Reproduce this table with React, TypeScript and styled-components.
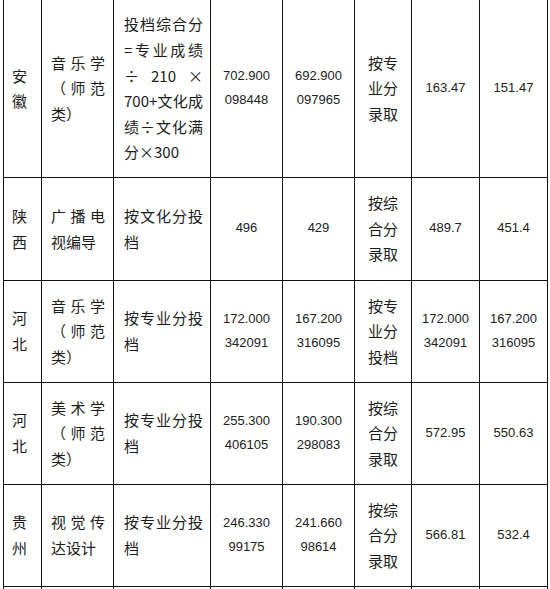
import React from 'react';
import styled, { createGlobalStyle } from 'styled-components';

// 一行招生数据
interface Entry {
  height: number;
  province: string[];
  major: string[];
  rule: string[];
  scoreA: string[];
  scoreB: string[];
  mode: string[];
  scoreC: string[];
  scoreD: string[];
}

const GlobalStyle = createGlobalStyle`
  html, body {
    margin: 0;
    padding: 0;
    background: #fff;
  }
  body {
    font-family: "Noto Sans CJK SC", "Noto Sans", sans-serif;
    color: #1c1c1c;
  }
`;

const Page = styled.div`
  padding-left: 3px;
  width: 547px;
  overflow: hidden;
`;

const Table = styled.table`
  border-collapse: collapse;
  table-layout: fixed;
  width: 544px;

  tr:first-child td {
    border-top: none;
  }
`;

const Row = styled.tr<{ $h: number }>`
  height: ${p => p.$h}px;
`;

const Cell = styled.td<{ $align?: 'left' | 'center'; $pl?: number; $pr?: number }>`
  border: 1px solid #111;
  padding: 0 ${p => p.$pr ?? 4}px 0 ${p => p.$pl ?? 4}px;
  vertical-align: middle;
  text-align: ${p => p.$align ?? 'center'};
  font-size: 15px;
  line-height: 25.6px;
  overflow: hidden;
`;

const Line = styled.div<{ $justify?: boolean }>`
  white-space: nowrap;
  text-align: ${p => (p.$justify ? 'justify' : 'inherit')};
  text-align-last: ${p => (p.$justify ? 'justify' : 'auto')};
  ${p => p.$justify && 'white-space: normal;'}
`;

const Num = styled.div`
  font-family: "Liberation Sans", Arial, sans-serif;
  font-size: 13px;
  line-height: 24.5px;
  color: #222;
`;

const rows: Entry[] = [
  {
    height: 177,
    province: ['安', '徽'],
    major: ['音乐学', '（师范', '类）'],
    rule: ['投档综合分', '=专业成绩', '÷ 210 ×', '700+文化成', '绩÷文化满', '分×300'],
    scoreA: ['702.900', '098448'],
    scoreB: ['692.900', '097965'],
    mode: ['按专', '业分', '录取'],
    scoreC: ['163.47'],
    scoreD: ['151.47'],
  },
  {
    height: 103,
    province: ['陕', '西'],
    major: ['广播电', '视编导'],
    rule: ['按文化分投', '档'],
    scoreA: ['496'],
    scoreB: ['429'],
    mode: ['按综', '合分', '录取'],
    scoreC: ['489.7'],
    scoreD: ['451.4'],
  },
  {
    height: 102,
    province: ['河', '北'],
    major: ['音乐学', '（师范', '类）'],
    rule: ['按专业分投', '档'],
    scoreA: ['172.000', '342091'],
    scoreB: ['167.200', '316095'],
    mode: ['按专', '业分', '投档'],
    scoreC: ['172.000', '342091'],
    scoreD: ['167.200', '316095'],
  },
  {
    height: 102,
    province: ['河', '北'],
    major: ['美术学', '（师范', '类）'],
    rule: ['按专业分投', '档'],
    scoreA: ['255.300', '406105'],
    scoreB: ['190.300', '298083'],
    mode: ['按综', '合分', '录取'],
    scoreC: ['572.95'],
    scoreD: ['550.63'],
  },
  {
    height: 102,
    province: ['贵', '州'],
    major: ['视觉传', '达设计'],
    rule: ['按专业分投', '档'],
    scoreA: ['246.330', '99175'],
    scoreB: ['241.660', '98614'],
    mode: ['按综', '合分', '录取'],
    scoreC: ['566.81'],
    scoreD: ['532.4'],
  },
];

const Justified: React.FC<{ lines: string[] }> = ({ lines }) => (
  <>
    {lines.map((l, i) => (
      <Line key={i} $justify={i < lines.length - 1}>
        {l}
      </Line>
    ))}
  </>
);

const Plain: React.FC<{ lines: string[] }> = ({ lines }) => (
  <>
    {lines.map((l, i) => (
      <Line key={i}>{l}</Line>
    ))}
  </>
);

const Numbers: React.FC<{ lines: string[] }> = ({ lines }) => (
  <>
    {lines.map((l, i) => (
      <Num key={i}>{l}</Num>
    ))}
  </>
);

const App: React.FC = () => (
  <>
    <GlobalStyle />
    <Page lang="zh-CN">
      <Table>
        <colgroup>
          <col style={{ width: 38 }} />
          <col style={{ width: 72 }} />
          <col style={{ width: 97 }} />
          <col style={{ width: 72 }} />
          <col style={{ width: 72 }} />
          <col style={{ width: 57 }} />
          <col style={{ width: 68 }} />
          <col style={{ width: 68 }} />
        </colgroup>
        <tbody>
          {rows.map((r, i) => (
            <Row key={i} $h={r.height}>
              <Cell $align="left" $pl={8} $pr={6}>
                <Plain lines={r.province} />
              </Cell>
              <Cell $align="left" $pl={9} $pr={8}>
                <Justified lines={r.major} />
              </Cell>
              <Cell $align="left" $pl={10} $pr={7}>
                <Justified lines={r.rule} />
              </Cell>
              <Cell>
                <Numbers lines={r.scoreA} />
              </Cell>
              <Cell>
                <Numbers lines={r.scoreB} />
              </Cell>
              <Cell>
                <Plain lines={r.mode} />
              </Cell>
              <Cell>
                <Numbers lines={r.scoreC} />
              </Cell>
              <Cell>
                <Numbers lines={r.scoreD} />
              </Cell>
            </Row>
          ))}
          <Row $h={100}>
            {Array.from({ length: 8 }).map((_, i) => (
              <Cell key={i} />
            ))}
          </Row>
        </tbody>
      </Table>
    </Page>
  </>
);

export default App;
